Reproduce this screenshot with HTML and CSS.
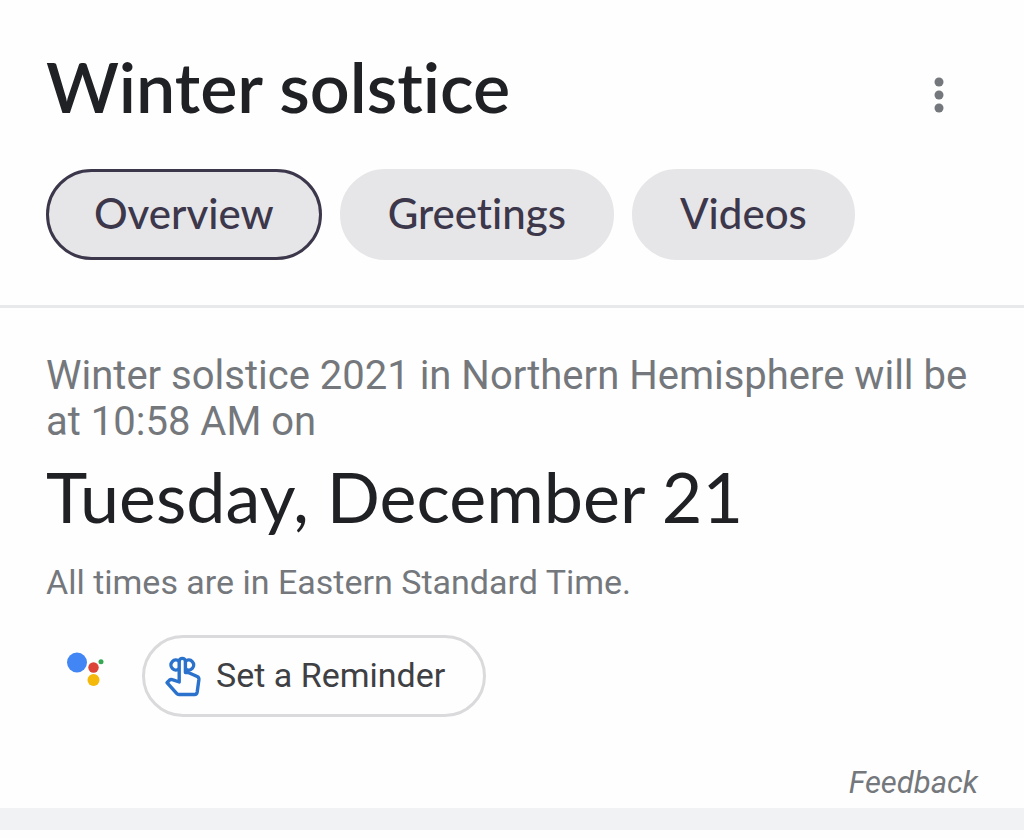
FILE: index.html
```html
<!DOCTYPE html>
<html lang="en">
<head>
<meta charset="utf-8">
<meta name="viewport" content="width=device-width, initial-scale=1">
<title>Winter solstice</title>
<link rel="stylesheet" href="styles.css">
</head>
<body>
<main class="panel">
  <header class="panel-header">
    <div class="title-row">
      <h1 class="title">Winter solstice</h1>
      <button class="menu-button" type="button" aria-label="More options">
        <svg class="menu-icon" viewBox="0 0 10 36" aria-hidden="true">
          <circle cx="5" cy="5" r="4.5"/><circle cx="5" cy="18" r="4.5"/><circle cx="5" cy="31" r="4.5"/>
        </svg>
      </button>
    </div>
    <nav class="chips" aria-label="Sections">
      <button class="chip chip-active" type="button" aria-current="page">Overview</button>
      <button class="chip" type="button">Greetings</button>
      <button class="chip" type="button">Videos</button>
    </nav>
  </header>
  <section class="answer">
    <p class="lead">Winter solstice 2021 in Northern Hemisphere will be at 10:58 AM on</p>
    <h2 class="date">Tuesday, December 21</h2>
    <p class="note">All times are in Eastern Standard Time.</p>
    <div class="actions">
      <svg class="assistant" viewBox="0 0 38 34" aria-hidden="true">
        <circle cx="11" cy="10.5" r="10" fill="#4285f4"/>
        <circle cx="27.5" cy="15.5" r="5.2" fill="#db4437"/>
        <circle cx="27.5" cy="28" r="6" fill="#f4b90b"/>
        <circle cx="35" cy="9.7" r="2.5" fill="#34a853"/>
      </svg>
      <button class="reminder" type="button">
        <svg class="reminder-icon" viewBox="0 0 38 42" fill="none" stroke="#2a72cc" stroke-width="3.4" stroke-linejoin="round" aria-hidden="true">
          <path d="M15.200 26V5.500a3.100 3.100 0 0 1 6.200 0V16.500h2.800l9 4q1.900 1 1.700 3l-1.700 12.500q-.4 2.500-2.600 2.500H15q-1.400 0-2.400-1.200L3 26.700l2.500-2.600q1.200-1 2.800-.4z"/>
          <path d="M15.200 5.200a5 5 0 1 0 0 7.600M21.400 5.200a5 5 0 1 1 0 7.600"/>
        </svg>
        <span>Set a Reminder</span>
      </button>
    </div>
    <a class="feedback" href="#">Feedback</a>
  </section>
</main>
</body>
</html>
```
FILE: styles.css
```css
* {
  box-sizing: border-box;
}

body {
  margin: 0;
  background: #fefefe;
  color: #202124;
  font-family: Roboto, "Liberation Sans", sans-serif;
}

button {
  border: 0;
  background: none;
  padding: 0;
  font: inherit;
  cursor: pointer;
}

h1, h2, p {
  margin: 0;
}

.panel {
  border-bottom: 22px solid #f0f2f4;
}

.panel-header {
  padding: 46px 46px 45px;
  border-bottom: 3px solid #e8e9eb;
}

.title-row {
  display: flex;
  align-items: center;
  justify-content: space-between;
  padding-right: 22px;
}

.title {
  font-family: Lato, Roboto, sans-serif;
  font-size: 70px;
  line-height: 80px;
  font-weight: 600;
  font-variant-ligatures: none;
}

.menu-button {
  display: flex;
  padding: 18px 12px 0;
}

.menu-icon {
  width: 10px;
  height: 36px;
  fill: #74777b;
}

.chips {
  display: flex;
  flex-wrap: wrap;
  gap: 18px;
  margin-top: 43px;
}

.chip {
  padding: 19px 45px 21px;
  border: 3px solid #e6e6e8;
  border-radius: 46px;
  background: #e6e6e8;
  color: #3d374b;
  font-family: Lato, Roboto, sans-serif;
  font-size: 42px;
  line-height: 45px;
  font-weight: 500;
  font-variant-ligatures: none;
}

.chip-active {
  border-color: #3d374b;
}

.answer {
  display: flex;
  flex-direction: column;
  padding: 45px 46px 6px;
}

.lead {
  color: #74787c;
  font-size: 40px;
  line-height: 46px;
}

.date {
  margin-top: 11px;
  font-family: Lato, Roboto, sans-serif;
  font-size: 70px;
  line-height: 80px;
  font-weight: 400;
}

.note {
  margin-top: 24px;
  color: #74787c;
  font-size: 34px;
  line-height: 45px;
}

.actions {
  display: flex;
  align-items: center;
  gap: 38px;
  margin-top: 30px;
  padding-left: 20px;
}

.assistant {
  width: 38px;
  height: 34px;
  margin-bottom: 14px;
}

.reminder {
  display: flex;
  align-items: center;
  gap: 14px;
  padding: 14px 38px 16px 19px;
  border: 3px solid #dadadc;
  border-radius: 41px;
  color: #3f4043;
  font-size: 34px;
  line-height: 44px;
}

.reminder-icon {
  width: 38px;
  height: 42px;
  margin-top: 4px;
}

.feedback {
  align-self: flex-end;
  margin-top: 47px;
  color: #74787c;
  font-size: 31px;
  font-style: italic;
  line-height: 38px;
  text-decoration: none;
}
```
